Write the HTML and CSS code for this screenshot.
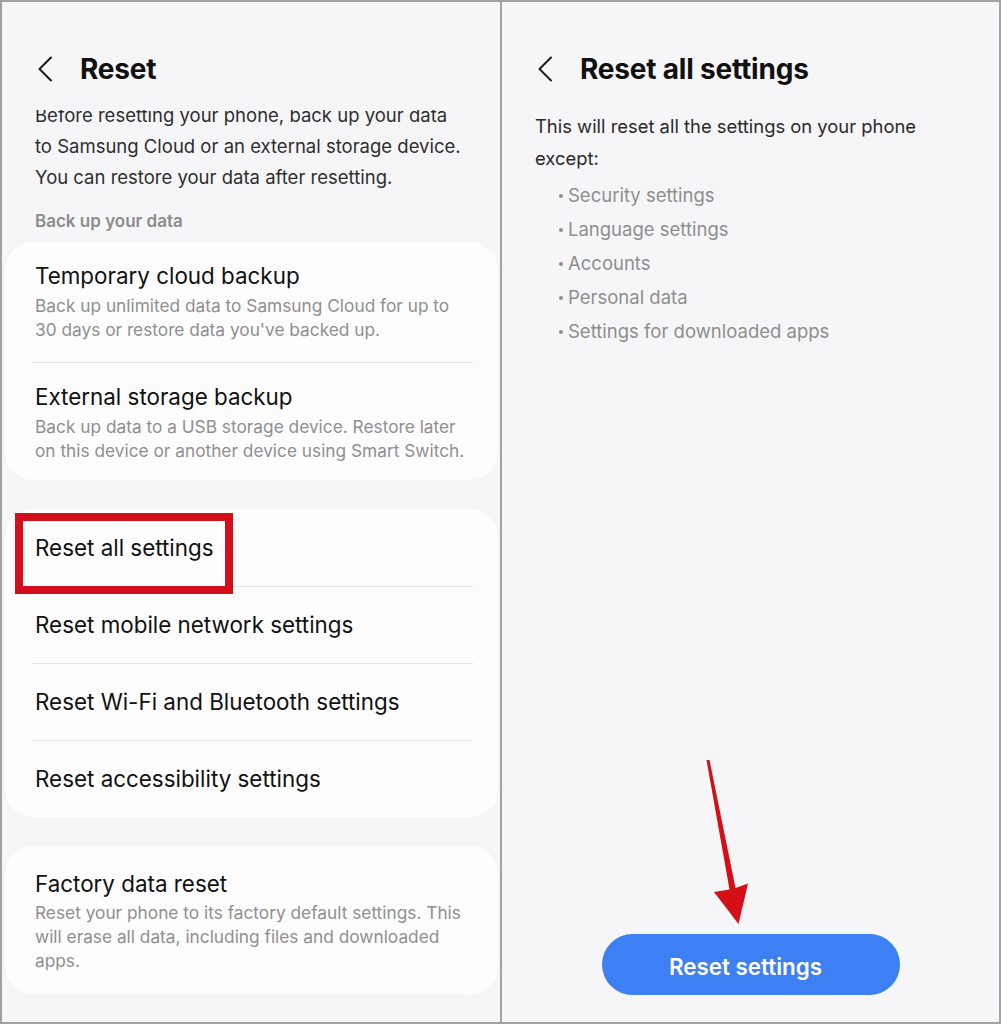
FILE: index.html
```html
<!DOCTYPE html>
<html lang="en">
<head>
<meta charset="utf-8">
<title>Reset</title>
<link rel="stylesheet" href="styles.css">
</head>
<body>
<div class="frame">
  <section class="panel">
    <header class="appbar">
      <svg class="back" width="16" height="26" viewBox="0 0 16 26"><polyline points="14,1.5 2.5,13 14,24.5" fill="none" stroke="#1a1a1a" stroke-width="2" stroke-linecap="round" stroke-linejoin="round"/></svg>
      <h1 class="title">Reset</h1>
    </header>
    <div class="scroll">
      <div class="scroll-inner">
        <p class="intro">Before resetting your phone, back up your data<br>to Samsung Cloud or an external storage device.<br>You can restore your data after resetting.</p>
        <div class="label">Back up your data</div>
        <div class="card">
          <div class="item">
            <div class="item-title">Temporary cloud backup</div>
            <div class="item-sub">Back up unlimited data to Samsung Cloud for up to<br>30 days or restore data you've backed up.</div>
          </div>
          <div class="divider"></div>
          <div class="item item-last">
            <div class="item-title">External storage backup</div>
            <div class="item-sub">Back up data to a USB storage device. Restore later<br>on this device or another device using Smart Switch.</div>
          </div>
        </div>
        <div class="card card-list">
          <div class="row"><span class="item-title">Reset all settings</span><span class="highlight"></span></div>
          <div class="divider"></div>
          <div class="row"><span class="item-title">Reset mobile network settings</span></div>
          <div class="divider"></div>
          <div class="row"><span class="item-title">Reset Wi-Fi and Bluetooth settings</span></div>
          <div class="divider"></div>
          <div class="row"><span class="item-title">Reset accessibility settings</span></div>
        </div>
        <div class="card">
          <div class="item item-factory">
            <div class="item-title">Factory data reset</div>
            <div class="item-sub">Reset your phone to its factory default settings. This<br>will erase all data, including files and downloaded<br>apps.</div>
          </div>
        </div>
      </div>
    </div>
  </section>
  <div class="sep"></div>
  <section class="panel panel-right">
    <header class="appbar">
      <svg class="back" width="16" height="26" viewBox="0 0 16 26"><polyline points="14,1.5 2.5,13 14,24.5" fill="none" stroke="#1a1a1a" stroke-width="2" stroke-linecap="round" stroke-linejoin="round"/></svg>
      <h1 class="title">Reset all settings</h1>
    </header>
    <div class="content">
      <p class="body">This will reset all the settings on your phone<br>except:</p>
      <ul class="bullets">
        <li>Security settings</li>
        <li>Language settings</li>
        <li>Accounts</li>
        <li>Personal data</li>
        <li>Settings for downloaded apps</li>
      </ul>
    </div>
    <div class="spacer"></div>
    <button class="primary">Reset settings</button>
    <svg class="arrow" width="60" height="175" viewBox="0 0 60 175"><polygon points="6.5,5 9.5,5 35.5,133 48,128.5 38.5,169 14,137 29.5,134.5" fill="#d40f18"/></svg>
  </section>
</div>
</body>
</html>
```

FILE: styles.css
```css
* { box-sizing: border-box; }
html, body { margin: 0; padding: 0; background: #ffffff; }
body { font-family: Inter, "Noto Sans", sans-serif; color: #111111; }

.frame {
  width: 1001px;
  height: 1024px;
  border: 2px solid #a2a2a2;
  display: grid;
  grid-template-columns: 498px 2px 1fr;
  overflow: hidden;
}

.panel {
  background: #f6f6f8;
  display: flex;
  flex-direction: column;
  min-height: 0;
  overflow: hidden;
  position: relative;
}

.sep { background: #a2a2a2; }

.appbar {
  height: 108px;
  padding: 49px 0 0 35px;
  display: flex;
  align-items: flex-start;
  gap: 27px;
  flex: none;
}
.back { margin-top: 5px; flex: none; }
.title {
  margin: 0;
  font-size: 28px;
  line-height: 36px;
  font-weight: 700;
  letter-spacing: -0.2px;
  color: #111111;
}

.scroll { flex: 1; overflow: hidden; min-height: 0; }
.scroll-inner { margin-top: -10px; }

.intro {
  margin: 0 0 0 33px;
  font-size: 18.5px;
  line-height: 31px;
  color: #2e2e2e;
}

.label {
  margin: 18px 0 11px 33px;
  font-size: 17px;
  line-height: 20px;
  font-weight: 600;
  color: #8c8c8c;
}

.card {
  background: #fdfdfe;
  border-radius: 28px;
  margin: 0 2px 0 3px;
}
.card + .card { margin-top: 29px; }

.item { padding: 20px 16px 20px 30px; }
.item-last { padding-bottom: 17px; }
.item-factory { padding: 24px 16px 21px 30px; }

.item-title {
  font-size: 22.4px;
  line-height: 28px;
  color: #111111;
}
.item-sub {
  margin-top: 4px;
  font-size: 17.3px;
  line-height: 24px;
  color: #8f8f8f;
}
.item-factory .item-sub { margin-top: 3px; }

.divider {
  height: 1px;
  background: #e5e5e7;
  margin: 0 25px 0 27px;
}

.card-list { padding: 1px 0 0; }
.row {
  position: relative;
  padding: 24px 16px 24px 30px;
}
.row .item-title { display: block; }

.highlight {
  position: absolute;
  left: 10px;
  top: 3px;
  width: 218px;
  height: 81px;
  border: 8px solid #d20f1a;
}

.content { padding: 0 0 0 33px; }
.body {
  margin: 0;
  font-size: 18.4px;
  line-height: 32px;
  color: #2a2a2a;
}
.bullets {
  list-style: none;
  margin: 4px 0 0;
  padding: 0 0 0 24px;
}
.bullets li {
  display: flex;
  align-items: center;
  font-size: 18.5px;
  line-height: 34px;
  color: #8e8e8e;
}
.bullets li::before {
  content: "";
  width: 4px;
  height: 4px;
  border-radius: 50%;
  background: #8e8e8e;
  margin: 1px 5px 0 0;
  flex: none;
}

.spacer { flex: 1; }

.primary {
  align-self: center;
  width: 298px;
  height: 61px;
  margin: 0 0 27px 0;
  padding: 3px 10px 0 0;
  border: none;
  border-radius: 31px;
  background: #3c80f3;
  color: #ffffff;
  font-family: Inter, "Noto Sans", sans-serif;
  font-size: 22.4px;
  font-weight: 600;
}

.arrow {
  position: absolute;
  left: 198px;
  top: 753px;
}
```
